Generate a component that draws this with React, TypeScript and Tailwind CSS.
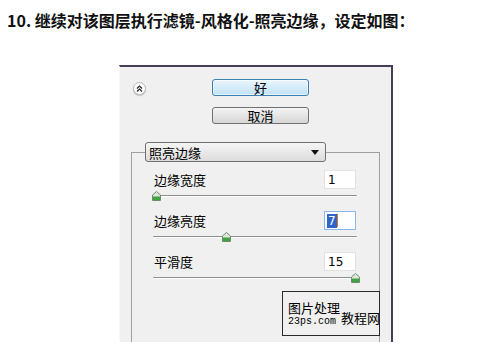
import { ReactNode } from 'react';

const cjk = { fontFamily: '"Noto Sans CJK SC", "Liberation Sans", sans-serif' };
const sans = { fontFamily: 'Tahoma, "DejaVu Sans", "Liberation Sans", sans-serif' };
const mono = { fontFamily: '"Liberation Mono", "DejaVu Sans Mono", monospace' };

function Thumb() {
  return (
    <svg width="9" height="10" viewBox="0 0 9 10" className="block">
      <path d="M4.5 0.5 L8.5 4 L8.5 9.5 L0.5 9.5 L0.5 4 Z" fill="#dfe6df" stroke="#6f8a6f" strokeWidth="1" />
      <path d="M1 5.5 H8 V9 H1 Z" fill="#3fa33f" />
    </svg>
  );
}

function Slider({ pos }: { pos: number }) {
  // pos is the thumb centre in px from the track's left end
  return (
    <div className="relative h-[22px] ml-[21px] w-[204px]">
      <div className="absolute left-0 right-0 top-[6px] h-[2px] border-t border-[#8f8f8f] border-b border-b-white rounded-full" />
      <div className="absolute top-[2px]" style={{ left: pos - 4 }}>
        <Thumb />
      </div>
    </div>
  );
}

function Row({ label, children }: { label: string; children: ReactNode }) {
  return (
    <div className="flex items-center justify-between h-[19px] pl-[22px] pr-[23px]">
      <span className="text-[13px] text-black leading-none" style={cjk}>
        {label}
      </span>
      {children}
    </div>
  );
}

function Field({ value, focused }: { value: string; focused?: boolean }) {
  return (
    <div
      className={
        focused
          ? 'w-[32px] h-[19px] bg-white border border-[#8ab8e6] flex items-center pl-[2px]'
          : 'w-[32px] h-[19px] bg-white border border-[#e2e2e2] flex items-center pl-[3px]'
      }
      style={sans}
    >
      {focused ? (
        <span className="flex items-center">
          <span className="bg-[#2f64c8] text-white text-[12px] leading-[14px] px-[1px]">{value}</span>
          <span className="w-[1px] h-[13px] bg-[#e07b20]" />
        </span>
      ) : (
        <span className="text-[12px] text-black leading-none">{value}</span>
      )}
    </div>
  );
}

export default function App() {
  return (
    <div className="w-[500px] h-[364px] bg-white overflow-hidden">
      <div className="pt-[11px] pl-[7px] text-[16px] leading-[18px] font-semibold text-[#111] whitespace-nowrap" style={cjk}>
        10. 继续对该图层执行滤镜-风格化-照亮边缘，设定如图：
      </div>

      <div className="ml-[119px] mt-[36px] w-[274px] h-[277px] bg-[#f0f0f0] border-t-2 border-r-2 border-[#463d57] border-l border-l-[#f8f8f8] overflow-hidden">
        {/* buttons */}
        <div className="flex pt-[12px]">
          <div className="ml-[13px] mt-[3px] w-[13px] h-[13px] rounded-full bg-white border border-[#b9b9b9] shadow-[0_1px_1px_rgba(0,0,0,0.2)] flex items-center justify-center">
            <svg width="7" height="7" viewBox="0 0 7 7">
              <path d="M1 3.5 L3.5 1 L6 3.5 M1 6.5 L3.5 4 L6 6.5" fill="none" stroke="#222" strokeWidth="1.2" />
            </svg>
          </div>
          <div className="ml-[66px] flex flex-col gap-[11px]">
            <div
              className="w-[97px] h-[17px] rounded-[3px] border border-[#3c7fb1] bg-gradient-to-b from-[#eaf6fd] to-[#bfe2f6] shadow-[inset_0_0_0_1px_rgba(255,255,255,0.6)] flex items-center justify-center text-[13px] leading-none text-black"
              style={cjk}
            >
              好
            </div>
            <div
              className="w-[97px] h-[17px] rounded-[3px] border border-[#707070] bg-gradient-to-b from-[#f4f4f4] to-[#d6d6d6] flex items-center justify-center text-[13px] leading-none text-black"
              style={cjk}
            >
              取消
            </div>
          </div>
        </div>

        {/* group box */}
        <div className="relative ml-[11px] mt-[28px] w-[249px] h-[220px] border-t border-l border-r border-[#a0a0a0]">
          <div
            className="-mt-[11px] ml-[13px] w-[181px] h-[20px] rounded-[3px] border border-[#707070] bg-gradient-to-b from-[#f6f6f6] to-[#dcdcdc] flex items-center justify-between pl-[3px] pr-[6px]"
            style={cjk}
          >
            <span className="text-[13px] leading-none text-black">照亮边缘</span>
            <svg width="8" height="5" viewBox="0 0 8 5">
              <path d="M0 0 H8 L4 5 Z" fill="#111" />
            </svg>
          </div>

          <div className="mt-[8px]">
            <Row label="边缘宽度">
              <Field value="1" />
            </Row>
            <Slider pos={3} />
            <Row label="边缘亮度">
              <Field value="7" focused />
            </Row>
            <Slider pos={73} />
            <Row label="平滑度">
              <Field value="15" />
            </Row>
            <Slider pos={202} />
          </div>

          <div className="absolute left-[150px] top-[138px] w-[98px] h-[45px] border border-[#2a2a2a] bg-[#f0f0f0] flex items-center pl-[5px] whitespace-nowrap">
            <div className="flex flex-col">
              <span className="text-[13px] leading-[15px] text-black" style={cjk}>
                图片处理
              </span>
              <span className="text-[10px] leading-[13px] text-black" style={mono}>
                23ps.com
              </span>
            </div>
            <span className="mt-[8px] ml-[1px] text-[13px] leading-none text-black" style={cjk}>
              教程网
            </span>
          </div>
        </div>
      </div>
    </div>
  );
}
